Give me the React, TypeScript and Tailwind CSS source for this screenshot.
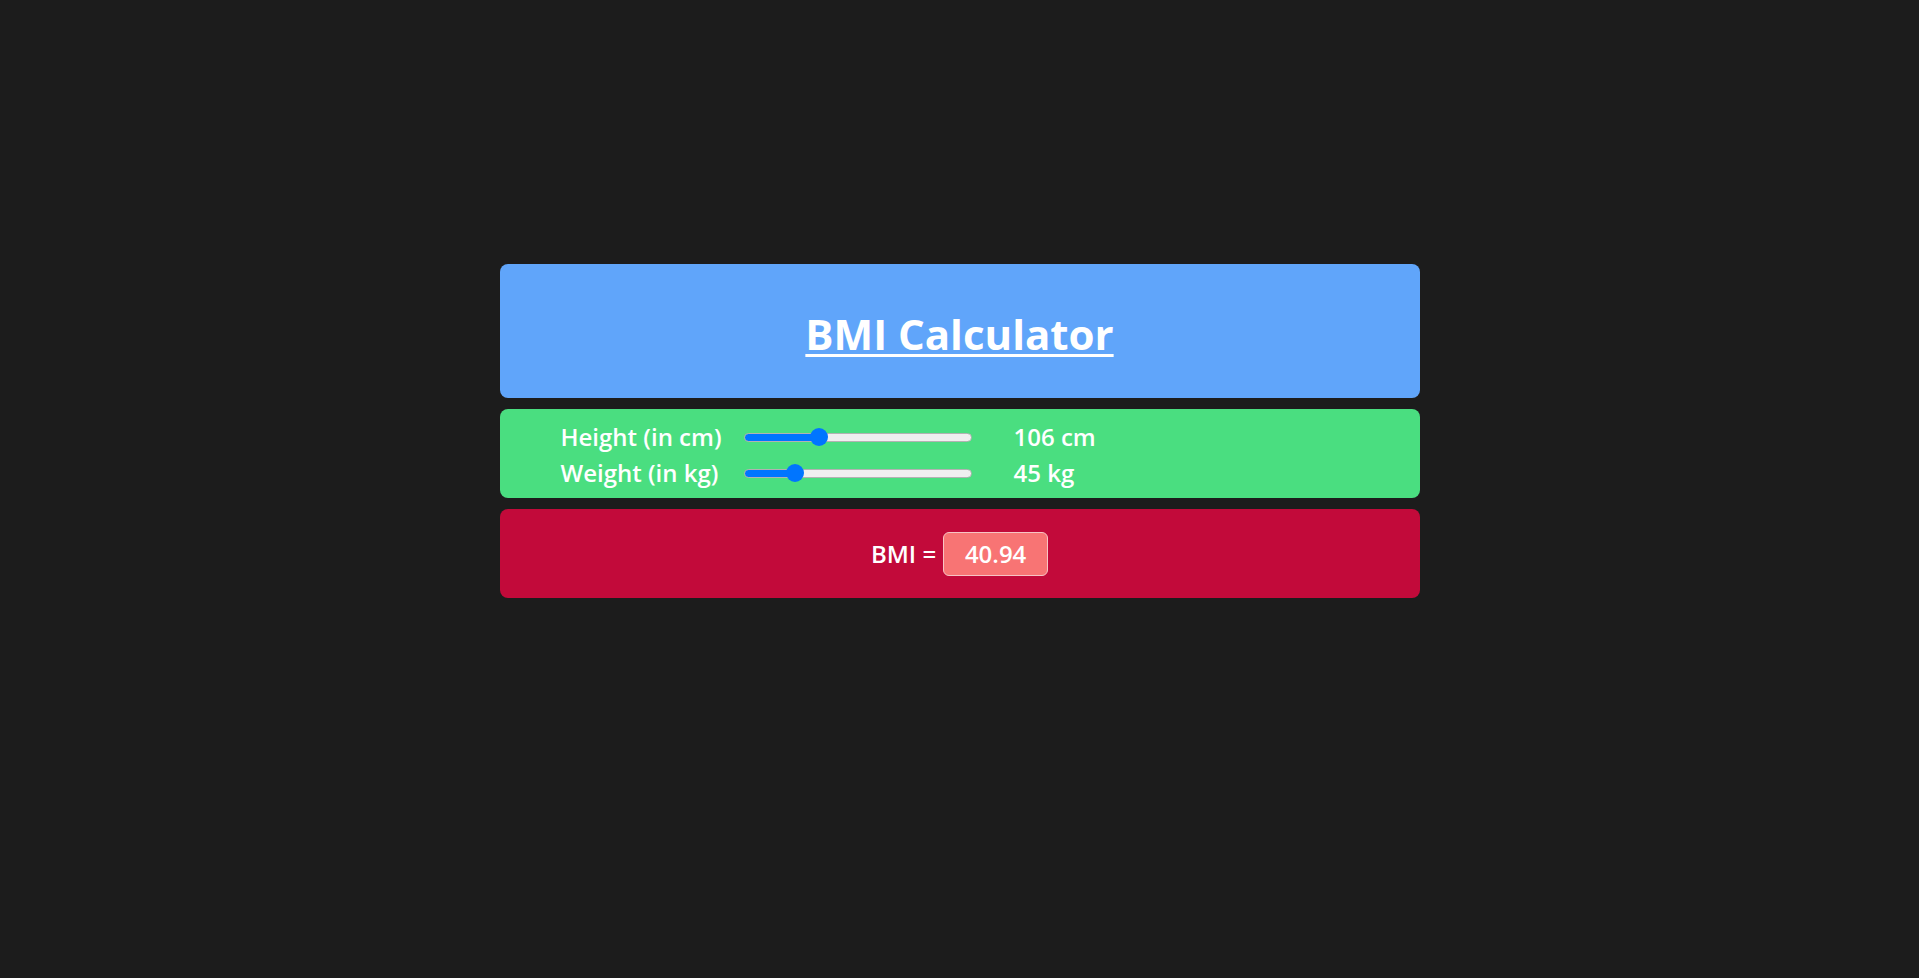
import { useState } from "react";

const font = { fontFamily: '"Open Sans", "Noto Sans", Arial, sans-serif' };

// track is 228px, thumb 18px: the thumb centre runs from 9px to 219px
function Slider({ value, max, onChange }: { value: number; max: number; onChange: (v: number) => void }) {
  const centre = 9 + (value / max) * 210;
  return (
    <input
      type="range"
      min={0}
      max={max}
      value={value}
      onChange={(e) => onChange(Number(e.target.value))}
      className="m-0 h-[9px] w-[228px] cursor-pointer appearance-none rounded-full border border-[#b2b2b2] [&::-webkit-slider-thumb]:h-[18px] [&::-webkit-slider-thumb]:w-[18px] [&::-webkit-slider-thumb]:appearance-none [&::-webkit-slider-thumb]:rounded-full [&::-webkit-slider-thumb]:bg-[#0075ff]"
      style={{ background: `linear-gradient(to right, #0075ff ${centre}px, #efefef ${centre}px)` }}
    />
  );
}

export default function App() {
  const [height, setHeight] = useState(106);
  const [weight, setWeight] = useState(45);

  return (
    <div className="min-h-screen w-full bg-[#1c1c1c] pt-[264px] text-white" style={font}>
      <div className="mx-auto flex w-[920px] flex-col gap-[11px]">
        {/* header */}
        <div className="flex h-[134px] justify-center rounded-lg bg-[#60a5fa] pt-[42px]">
          <h1 className="h-[56px] text-[42px] leading-[56px] font-bold underline decoration-[3px] underline-offset-[4px]">
            BMI Calculator
          </h1>
        </div>

        {/* inputs */}
        <div className="rounded-lg bg-[#4ade80] pt-[10px] pb-[7px] pl-[61px] text-[24px] font-semibold">
          <div className="flex h-[36px] items-center">
            <span className="w-[183px]">Height (in cm)</span>
            <Slider value={height} max={338} onChange={setHeight} />
            <span className="ml-[42px]">{height} cm</span>
          </div>
          <div className="flex h-[36px] items-center">
            <span className="w-[183px]">Weight (in kg)</span>
            <Slider value={weight} max={225} onChange={setWeight} />
            <span className="ml-[42px]">{weight} kg</span>
          </div>
        </div>

        {/* result */}
        <div className="flex h-[89px] items-center justify-center gap-[7px] rounded-lg bg-[#c20a3a] text-[24px] font-semibold">
          <span>BMI =</span>
          <span className="flex h-[44px] w-[105px] items-center justify-center rounded-md border border-[#f7c4c4] bg-[#f87474]">
            40.94
          </span>
        </div>
      </div>
    </div>
  );
}
